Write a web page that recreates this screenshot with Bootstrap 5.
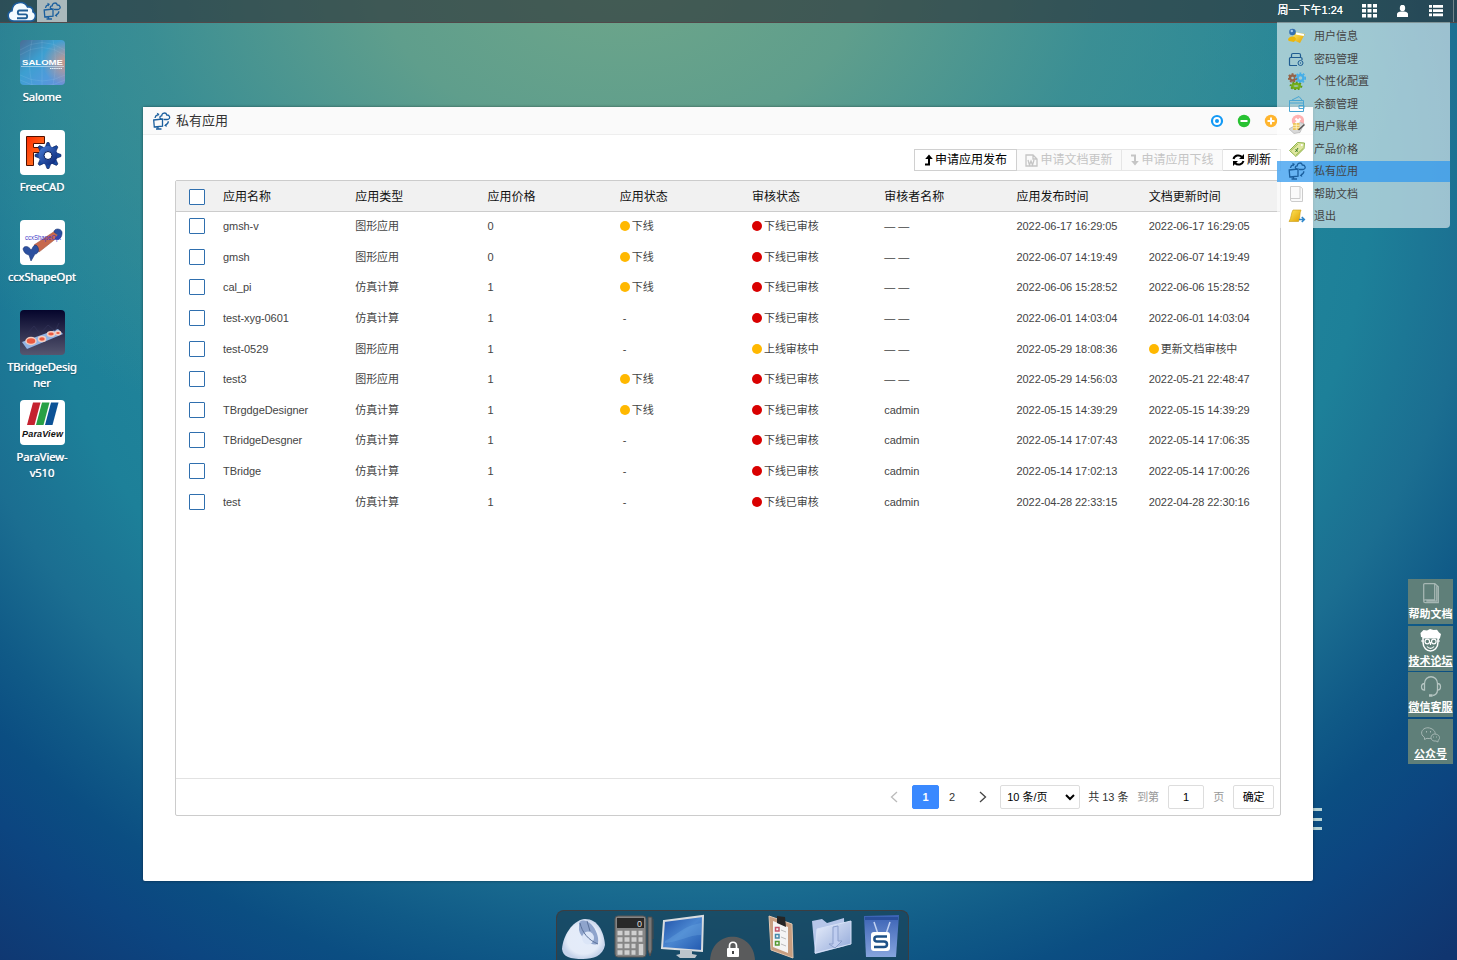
<!DOCTYPE html>
<html lang="zh-CN">
<head>
<meta charset="utf-8">
<meta name="viewport" content="width=device-width, initial-scale=1">
<title>私有应用</title>
<link href="https://cdn.jsdelivr.net/npm/bootstrap@5.3.0/dist/css/bootstrap.min.css" rel="stylesheet">
<style>
body{height:960px;overflow:hidden;position:relative;font-family:"Liberation Sans","Noto Sans CJK SC",sans-serif;font-size:11px;line-height:16px;color:#444;
background:radial-gradient(ellipse 800px 520px at 620px -20px,#6ea68a 0,#5f9e8c 30%,rgba(66,145,146,.75) 60%,rgba(27,128,152,0) 100%),
radial-gradient(ellipse 1000px 900px at 700px 180px,#2c8c9a 0,#23869a 50%,#1d8099 67%,#1b6e91 78%,#105a87 87%,#0b4e82 93%,#0c4580 100%,#10356f 114%)}
svg{display:block;flex:none}
.topbar{height:23px;background:rgba(45,50,55,.65);border-bottom:1px solid #51494a;color:#fff}
.logo{margin-left:7px}
.task{width:30px;height:22px;margin-left:1px;background:rgba(255,255,255,.6)}
.clock{font-size:11px;text-shadow:0 0 .6px #fff;margin:-3px 19px 0 0}
.desk{position:absolute;left:6px;top:40px;width:72px}
.app{height:90px;color:#fff;font:11.4px/16px "Noto Sans",sans-serif;text-align:center}
.app svg{border-radius:4px;margin-bottom:4px}
.app span{letter-spacing:-.2px;text-shadow:0 0 .7px #fff,0 1px 1px #0006}
.win{position:absolute;left:143px;top:107px;width:1170px;height:774px;background:#fff;border-radius:2px;box-shadow:0 0 3px #0007}
.wtitle{height:28px;background:#fafafa;border-bottom:1px solid #eee;font-size:13px;color:#333;padding:0 10px 0 9px}
.tools{height:22px;margin:14px 32px 9px 0}
.tbtn{height:22px;border:1px solid #d0d0d0;border-left-width:0;font-size:12px;line-height:20px;color:#000;background:#fff;border-radius:0;padding:0;display:flex;align-items:center;justify-content:center;gap:2px}
.tbtn.off{background:#fafafa;color:#c5c5c5;border-color:#e6e6e6}
.grid-box{margin:0 32px;height:636px;border:1px solid #ccc;border-radius:2px;overflow:hidden}
.grow{display:grid;grid-template-columns:47px repeat(7,132.25px) 1fr;height:30.6px;align-items:center}
.ghead{height:31px;background:#f1f1f1;border-bottom:1px solid #ccc;font-size:12px;color:#111;padding-top:1px}
#rows{margin-top:-1px;letter-spacing:-.07px}
.cbx{width:16px;height:16px;border:1px solid #2f6fae;border-radius:1px;background:#fff;margin-left:13px}
.dot{display:inline-block;width:10px;height:10px;border-radius:50%;margin-right:2px;vertical-align:-1px}
.pager{height:37px;border-top:1px solid #e2e2e2;color:#333}
.pg{height:24px;border:1px solid #ddd;border-radius:2px;color:#000;display:flex;align-items:center;justify-content:center;background:#fff}
.umenu{position:absolute;left:1277px;top:22px;width:173px;height:206px;background:rgba(255,255,255,.57);border-radius:0 0 4px 4px;padding-top:2.5px;z-index:3;border-top:1px solid #809498}
.umenu div{height:21px;margin-bottom:1.5px;padding-left:11px;gap:8px}
.umenu .on{background:rgba(45,151,239,.72)}
.side{position:absolute;right:4px;top:579px;width:45px;z-index:2}
.side div{height:45px;margin-bottom:1.6px;background:#5f7f79;color:#fff;font-weight:bold;padding-top:3px;white-space:nowrap}
.side span{line-height:15px;display:block;margin-top:2px}
.dock{position:absolute;left:556px;top:910px;width:353px;height:50px;background:rgba(27,65,85,.68);border:1px solid #3c3d40;border-bottom:0;border-radius:8px 8px 0 0}
.handle{position:absolute;left:1306px;top:808px;width:16px;height:22px;border-top:3px solid #b5d2d5;border-bottom:3px solid #b5d2d5}
.handle i{display:block;height:3px;margin-top:7px;background:#b5d2d5}
</style>
<script src="https://cdn.jsdelivr.net/npm/bootstrap@5.3.0/dist/js/bootstrap.bundle.min.js"></script>
</head>
<body>
<svg width="0" height="0" class="position-absolute">
<defs>
<symbol id="pc" viewBox="0 0 18 18"><g fill="none" stroke="#1b5f9e" stroke-width="1.3"><path d="M1.200 8 10 7v7.200L1.800 15zM5.500 15v2M3.500 17h5.500"/><path d="M9 7C6.500 6.500 7 3.700 9.200 3.800 9.500.3 13.600.2 14.300 3c3-.2 4 3.600 1.300 4.300-2 .3-3.500.2-4.600 0"/><path d="M2.500 6C2.700 4.400 3.600 3.400 5 2.900M15.800 9.200c0 1.800-1 3-2.600 3.600"/></g><path fill="#1b5f9e" d="M4.300.8 7 2.100 5.200 4.500zM14.200 15l-2.600-1.400 2.300-2.200z"/></symbol>
<symbol id="book" viewBox="0 0 20 22"><path d="M3.500 2.500Q3.500 1.500 4.500 1.500H14V17H5q-1.500 0-1.500 1.300T5 19.700h12.500V4.500L14 1.500M3.500 2.500v16M6 18.400h10V4" fill="none" stroke="currentColor" stroke-width="1.200"/></symbol>
<linearGradient id="gy" x2="1" y2="1"><stop stop-color="#ffe65c"/><stop offset="1" stop-color="#e0a000"/></linearGradient>
<linearGradient id="gs" x2="1" y2="1"><stop stop-color="#4a6d95"/><stop offset=".4" stop-color="#3c9fd0"/><stop offset=".7" stop-color="#4f9bdb"/><stop offset="1" stop-color="#6b8fd8"/></linearGradient>
<radialGradient id="gs2" cx="1" cy=".5" r=".5"><stop stop-color="#c99a8c"/><stop offset="1" stop-color="#c99a8c" stop-opacity="0"/></radialGradient>
<linearGradient id="gr" x2="1" y2="1"><stop stop-color="#ff2a00"/><stop offset="1" stop-color="#ff8a2a"/></linearGradient>
<linearGradient id="gb" x2="1" y2="1"><stop stop-color="#4c80d8"/><stop offset="1" stop-color="#062070"/></linearGradient>
<linearGradient id="gd" x2="0" y2="1"><stop stop-color="#05052c"/><stop offset="1" stop-color="#55566f"/></linearGradient>
<radialGradient id="gw"><stop stop-color="#e4ecfa"/><stop offset=".75" stop-color="#e4ebf8"/><stop offset="1" stop-color="#c6d3ea"/></radialGradient>
<linearGradient id="gm" x2="1" y2="1"><stop stop-color="#1e4fa6"/><stop offset=".5" stop-color="#4a86d0"/><stop offset="1" stop-color="#2158ae"/></linearGradient>
<linearGradient id="gf" x2="1" y2="1"><stop stop-color="#eaf0fc"/><stop offset="1" stop-color="#8fa6d8"/></linearGradient>
<linearGradient id="gt" x2="0" y2="1"><stop stop-color="#3a62b4"/><stop offset="1" stop-color="#86a4de"/></linearGradient>
</defs></svg>

<nav class="topbar d-flex align-items-center">
<svg class="logo" width="29" height="21" viewBox="0 0 29 21"><path d="M7 20C.2 20-.8 11.500 5 9.800 5.500.5 17-1 20.500 6c4-.6 5.800 2 5.400 4.700C30 12.500 29 20 23.500 20z" fill="#f4fbff" stroke="#1e5d9c" stroke-width="1.600"/><path d="M21 9.500h-8.500c-2.200 0-2.200 3.900 0 3.900h6c2.200 0 2.200 3.900 0 3.900H10" fill="none" stroke="#215f96" stroke-width="1.900"/></svg>
<div class="task d-flex align-items-center justify-content-center me-auto"><svg width="18" height="18"><use href="#pc"/></svg></div>
<span class="clock">周一下午1:24</span>
<svg width="15" height="14" style="margin-right:20px" fill="#fff"><path d="M0 0h4v3.500H0zM5.500 0h4v3.500h-4zM11 0h4v3.500h-4zM0 5h4v3.500H0zM5.500 5h4v3.500h-4zM11 5h4v3.500h-4zM0 10h4v3.500H0zM5.500 10h4v3.500h-4zM11 10h4v3.500h-4z"/></svg>
<svg width="11" height="12" style="margin-right:21px" fill="#fff"><ellipse cx="5.500" cy="3" rx="2.700" ry="3.200"/><path d="M0 12V9c0-1.500 2-2 4-2.400h3C9 7 11 7.500 11 9v3z"/></svg>
<svg width="14" height="12" style="margin-right:10px" fill="#fff"><path d="M0 0h3v2.800H0zM4 0h10v2.800H4zM0 4.200h3V7H0zM4 4.200h10V7H4zM0 8.400h3v2.800H0zM4 8.400h10v2.800H4z"/></svg>
<i style="width:1px;height:22px;background:#71858b;margin-right:3px"></i>
</nav>

<aside class="desk">
<div class="app d-flex flex-column align-items-center"><svg width="45" height="45"><path fill="url(#gs)" d="M0 0h45v45H0z"/><path fill="url(#gs2)" d="M0 0h45v45H0z"/><g fill="none" stroke="#b9e0f5" stroke-opacity=".22" stroke-width=".6"><path d="M0 10Q22-5 45 10M0 15Q22 0 45 15M0 35Q22 47 45 35M0 40Q22 52 45 40M22 0v45M12 0Q7 22 12 45M33 0Q38 22 33 45"/></g><path d="M1 26.500h43" stroke="#d6ecf8" stroke-width=".6"/><text x="2" y="25" font-family="Liberation Sans" font-size="6.500" letter-spacing="0" font-weight="bold" fill="#fff" textLength="41" lengthAdjust="spacingAndGlyphs">SALOME</text><path d="M30 28.500h12" stroke="#e6f3fa" stroke-dasharray="1.500 .6"/></svg><span>Salome</span></div>
<div class="app d-flex flex-column align-items-center"><svg width="45" height="45"><path fill="#fff" d="M0 0h45v45H0z"/><path d="M6.500 6.500h18v7h-11v4h7v5h-7v13h-7z" fill="url(#gr)" stroke="#501000"/><g transform="translate(28 25.500)"><g fill="#1849a0" stroke="#061b55" stroke-width=".6"><path id="t" d="M-2.500-9-1-13H1L2.500-9V9L1 13H-1L-2.500 9z"/><use href="#t" transform="rotate(45)"/><use href="#t" transform="rotate(90)"/><use href="#t" transform="rotate(135)"/></g><circle r="9.500" fill="url(#gb)"/><circle r="4" fill="#fff" stroke="#061b55"/></g></svg><span>FreeCAD</span></div>
<div class="app d-flex flex-column align-items-center"><svg width="45" height="45"><path fill="#fff" d="M0 0h45v45H0z"/><path d="M14 25 35 11l3 6-19 15z" fill="#c7694d" stroke="#a55a45" stroke-width=".6"/><path d="M34 12c0-4 7-4 8 0 .500 5-3 9-7 7l3-4zM3 29c1-4 6-3 8 1 2-2 2-5 5-5 4 3 3 9-1 9l-4 7-2-6C5 34 4 32 3 29z" fill="#2c509f" stroke="#1c3878" stroke-width=".6"/><text x="5" y="20" font-family="Liberation Sans" font-size="7.500" letter-spacing="0" fill="#4038c8" textLength="36" lengthAdjust="spacingAndGlyphs">ccxShapeOpt</text></svg><span>ccxShapeOpt</span></div>
<div class="app d-flex flex-column align-items-center"><svg width="45" height="45"><path fill="url(#gd)" d="M0 0h45v45H0z"/><path d="m2 32 36-13 5 5L7 39z" fill="#92b5e5"/><g fill="#ea5a41" stroke="#f2cdc0" stroke-width="1.500"><ellipse cx="11" cy="31" rx="5" ry="3.500"/><ellipse cx="22" cy="29" rx="3.500" ry="2.500"/><ellipse cx="31" cy="24" rx="3.500" ry="2.200"/><ellipse cx="38" cy="23" rx="2.500" ry="1.700"/></g><path d="m6 25 8-9 6 8 8-9 7 6 4-8" fill="none" stroke="#303258" stroke-width=".7"/></svg><span>TBridgeDesig<br>ner</span></div>
<div class="app d-flex flex-column align-items-center"><svg width="45" height="45"><path fill="#fff" d="M0 0h45v45H0z"/><path fill="#c5222f" d="M13 2.500h7.500l-6 22.500H7z"/><path fill="#28a045" d="M22 2.500h7.500l-6 22.500H16z"/><path fill="#0c5296" d="M31 2.500h7.500l-6 22.500H25z"/><text x="2" y="37" font-family="Liberation Sans" font-size="9" letter-spacing="0" font-style="italic" font-weight="bold" fill="#111" textLength="41">ParaView</text></svg><span>ParaView-<br>v510</span></div>
</aside>

<div class="handle"><i></i></div>

<main class="win">
<header class="wtitle d-flex align-items-center">
<svg width="19" height="18" class="me-1"><use href="#pc"/></svg><span style="margin-left:1px">私有应用</span>
<svg class="ms-auto" width="94" height="14" style="margin-right:-1px"><circle cx="7" cy="7" r="5" fill="#fff" stroke="#1299f5" stroke-width="2.200"/><circle cx="7" cy="7" r="2" fill="#1299f5"/><circle cx="34" cy="7" r="6.200" fill="#28c232"/><path d="M30.500 7h7" stroke="#fff" stroke-width="2"/><circle cx="61" cy="7" r="6.200" fill="#ffb52e"/><path d="M57.500 7h7M61 3.500v7" stroke="#fff" stroke-width="2"/><circle cx="88" cy="7" r="6.200" fill="#ff4d4d"/><path d="m85.500 4.500 5 5m0-5-5 5" stroke="#fff" stroke-width="2"/></svg>
</header>
<div class="tools d-flex justify-content-end">
<button class="tbtn" style="width:103px;border-left-width:1px"><svg width="9" height="12"><path d="M1 10.500h4V4" fill="none" stroke="#000" stroke-width="2"/><path d="M1.200 5 5 .5 8.800 5z"/></svg>申请应用发布</button>
<button class="tbtn off" style="width:105px"><svg width="13" height="13" fill="none" stroke="#c5c5c5" stroke-width="1.300"><path d="M1 1h7l4 4v7H1zM8 1v4h4M3 6l1.500 5L6 7l1.500 4L9 6"/></svg>申请文档更新</button>
<button class="tbtn off" style="width:101px"><svg width="9" height="12"><path d="M1 1.500h4V8" fill="none" stroke="#c5c5c5" stroke-width="2"/><path d="M1.200 7 5 11.500 8.800 7z" fill="#c5c5c5"/></svg>申请应用下线</button>
<button class="tbtn" style="width:58px"><svg width="13" height="12"><path d="M1.500 5A5 4.800 0 0 1 10 3M11.500 7A5 4.800 0 0 1 3 9" fill="none" stroke="#000" stroke-width="2"/><path d="M12 0v5H7zM1 12V7h5z"/></svg>刷新</button>
</div>
<section class="grid-box d-flex flex-column">
<div class="grow ghead flex-shrink-0"><i class="cbx"></i><span>应用名称</span><span>应用类型</span><span>应用价格</span><span>应用状态</span><span>审核状态</span><span>审核者名称</span><span>应用发布时间</span><span>文档更新时间</span></div>
<div id="rows"></div>
<footer class="pager mt-auto d-flex align-items-center">
<svg width="8" height="12" style="margin-left:714px"><path d="M7 1 1.500 6 7 11" fill="none" stroke="#bbb" stroke-width="1.300"/></svg>
<span class="pg fw-bold text-white" style="width:27px;margin-left:14px;background:#3a89ff;border-color:#3a89ff">1</span>
<span style="margin-left:10px">2</span>
<svg width="8" height="12" style="margin-left:24px"><path d="m1 1 5.500 5L1 11" fill="none" stroke="#444" stroke-width="1.300"/></svg>
<span class="pg justify-content-between" style="width:80px;margin-left:13px;padding:0 4px 0 6px">10 条/页<svg width="10" height="7"><path d="m1 1 4 4 4-4" fill="none" stroke="#000" stroke-width="2"/></svg></span>
<span style="margin-left:8px;width:49px">共 13 条</span><span style="color:#999;width:31px">到第</span>
<span class="pg" style="width:36px">1</span><span style="margin-left:9px;width:20px;color:#999">页</span>
<span class="pg" style="width:41px">确定</span>
</footer>
</section>
</main>

<div class="umenu">
<div class="d-flex align-items-center"><svg width="18" height="18"><path d="m6 5 11 2-5 9-7-3z" fill="url(#gy)"/><path d="m8 6.500 8 1.500" stroke="#fff" stroke-width="2"/><circle cx="4.500" cy="5" r="3.300" fill="#356fb0"/><circle cx="3.800" cy="4" r="1.200" fill="#a9cdf0"/><path d="M0 13c0-4 7-5 8-1l-2 3-5-1z" fill="#e9b60d"/></svg>用户信息</div>
<div class="d-flex align-items-center"><svg width="18" height="18"><path d="M3.500 7.500V5q0-1.500 1.500-1.500h6q1.500 0 1.500 1.500v2.500M9 15.500H2.500q-1 0-1-1v-6q0-1 1-1H13q1 0 1 1V10" fill="none" stroke="#1f5c91" stroke-width="1.200"/><circle cx="12.500" cy="13" r="2.500" fill="none" stroke="#1f5c91"/><circle cx="12.500" cy="13" r=".7" fill="#1f5c91"/></svg>密码管理</div>
<div class="d-flex align-items-center"><svg width="18" height="18" fill="none"><g stroke-width="2.400"><circle cx="4.500" cy="6" r="2.500" stroke="#956347"/><circle cx="12.500" cy="6" r="3" stroke="#45aee8"/><ellipse cx="8" cy="14" rx="3.800" ry="2" stroke="#75ae18"/></g><g stroke-width="1.600" stroke-dasharray="1.800 1.700"><circle cx="4.500" cy="6" r="4" stroke="#956347"/><circle cx="12.500" cy="6" r="4.800" stroke="#45aee8"/><ellipse cx="8" cy="14" rx="5.600" ry="3.500" stroke="#5c9a10"/></g></svg>个性化配置</div>
<div class="d-flex align-items-center"><svg width="18" height="18"><path d="M1.500 5.500h14v11h-14zM4 5l7-3.500L14 5M1.500 8h14M11 10.500h5v3h-5z" fill="none" stroke="#48a5d2"/></svg>余额管理</div>
<div class="d-flex align-items-center"><svg width="18" height="18"><path d="m1 12 5 4.500 6-1 4-9-4-1z" fill="#d9d9d9" stroke="#aaa" stroke-width=".6"/><path d="M5 6h6.500v7H5z" fill="#edc55d"/><path d="M5 8.300h6.500M5 10.700h6.500M8.300 6v7" stroke="#fff5c8" stroke-width=".8"/><path d="m10.500 13 6-5.500" stroke="#555" stroke-width="1.500"/></svg>用户账单</div>
<div class="d-flex align-items-center"><svg width="18" height="18"><path d="m1.500 10.500 8-8 7 .5-.5 5.500-8 8z" fill="#dfe7a0" stroke="#8eb44c"/><path d="m3 10.500 7-6.500M8 15l7-6.500" stroke="#a6be58"/><path d="m7.500 9.500 2.500 2M7.500 12l2.500-4" fill="none" stroke="#347a24"/><circle cx="13.800" cy="5" r="1" fill="#fff"/></svg>产品价格</div>
<div class="d-flex align-items-center on"><svg width="18" height="18"><use href="#pc"/></svg>私有应用</div>
<div class="d-flex align-items-center"><svg width="18" height="18"><path d="M2.500 1.500h9.500l2.500 2v13h-11l-1-1.500z" fill="#fafafa" stroke="#ccc"/><path d="M3 13.500h9V2" fill="none" stroke="#ccc"/></svg>帮助文档</div>
<div class="d-flex align-items-center"><svg width="18" height="18"><path d="M5 3h8c-1.500 3-.5 7-2.500 11.500H1C3.500 11 3 6 5 3z" fill="url(#gy)" stroke="#c99a12" stroke-width=".6"/><path d="M11 12.500h5m-2.200-2.500 2.500 2.500-2.500 2.500" fill="none" stroke="#2f87ca" stroke-width="1.600"/></svg>退出</div>
</div>

<aside class="side">
<div class="text-center"><svg class="mx-auto" width="22" height="23" style="color:#a6b7b4"><use href="#book" width="21" height="23"/></svg><span>帮助文档</span></div>
<div class="text-center text-decoration-underline"><svg class="mx-auto" width="24" height="23"><path d="M2 8 1.500 4 4.500 1 8 1.500 11 0l3.500 1L18 .8l2 2.700 2 1.500-1 4-1.500 2z" fill="#fff"/><path d="M4 8h15v5c0 6-4 9-7.500 9S4 19 4 13z" fill="#5f7f79" stroke="#fff" stroke-width="1.500"/><path d="M4 8.500h15" stroke="#fff" stroke-width="2"/><g fill="none" stroke="#fff" stroke-width="1.200"><circle cx="8.300" cy="12.500" r="2.300"/><circle cx="14.800" cy="12.500" r="2.300"/><path d="M11.500 13v3M8 17.500c2 2.500 5 2.500 7 0M2 12h3m13 0h3"/></g></svg><span>技术论坛</span></div>
<div class="text-center text-decoration-underline"><svg class="mx-auto" width="22" height="23" fill="none" stroke="#b5c5c2" stroke-width="1.300"><path d="M4.500 8.500C4.500-.5 17.500-.5 17.500 8.500M4.500 8.500c-4 0-4 6.500 0 6.500zM17.500 8.500c4 0 4 6.500 0 6.500zM17.500 15c0 4-3 5.500-5 5.500"/><path d="M9 20.500h3.500" stroke-width="2.500"/></svg><span>微信客服</span></div>
<div class="text-center text-decoration-underline"><svg class="mx-auto" width="22" height="23" fill="none" stroke="#a6b7b4"><path d="M4.500 15.500c-7-5 0-12 6.500-9 3.500 1.500 4.500 4 4 5.500M4.500 15.500v2l2.500-1.200c1.500.4 3 .3 4 0"/><path d="M14.500 12c5 0 6.500 4.500 3.500 6.500v1.500l-2-1c-3 .5-5-1-5-3.500.2-2 1.500-3.300 3.500-3.500z"/><path d="M6.500 9v1.500m4-1.500v1.500m3 4v1m3-1v1"/></svg><span>公众号</span></div>
</aside>

<footer class="dock">
<svg width="351" height="49">
<path d="M5 38C6 25 15 10 27 8c13-1 20 12 21 26-2 11-12 14-22 14C13 48 6 46 5 38z" fill="url(#gw)"/><path d="M22 13c1-5 7-4 12 0 5 5 8 13 7 19-3 5-17-3-19-13z" fill="#8fa4cc"/><ellipse cx="31" cy="27" rx="6" ry="6.500" fill="#dbe5f7"/><path d="M23 12c2 9 8 17 18 21M30 10l3 10" fill="none" stroke="#5a7099"/>
<rect x="58" y="5" width="31" height="41" rx="3" fill="#858585" stroke="#555"/><path d="M60 7h27v10H60z" fill="#282828"/><text x="80" y="16" font-size="9" fill="#ddd">0</text><g stroke="#cfcfcf" stroke-width="4.500"><path d="M60.500 22h25" stroke-dasharray="5 2"/><path d="M60.500 28.500h25" stroke-dasharray="5 2"/><path d="M60.500 35h18" stroke-dasharray="5 2"/><path d="M60.500 41.500h18" stroke-dasharray="5 2"/><path d="M84 33v11"/></g><path d="M91 6h4v33l-2 6-2-6zM96 8v20" fill="#777" stroke="#4b4b4b"/>
<path d="m107 10 39-5-1 35-40-3z" fill="url(#gm)" stroke="#d8dce0" stroke-width="2"/><path d="M108 30c12-6 18-15 36-18v12c-12 0-22 7-36 8z" fill="#6ea8e2" opacity=".35"/><path d="M123 39h12v4l5 1-2 3h-15l-4-3 4-1z" fill="#bdc5cc"/>
<path d="M153 49c2-31 43-31 45 0z" fill="#5a5b5c"/><rect x="170" y="37" width="12" height="9" rx="1" fill="#fff"/><path d="M172.500 38v-3c0-5 7-5 7 0v3" fill="none" stroke="#fff" stroke-width="1.700"/><path d="M176 40v3" stroke="#444" stroke-width="2"/>
<path d="m212 5 23 8 1 34-22-8z" fill="#c79e80" stroke="#e1c7b2"/><path d="m216 10 15 6v26l-15-6z" fill="#f4f4f4"/><path d="m220 5 8 1 1 10-9-4z" fill="#252525"/><g fill="none" stroke-width="1.500"><path d="M218.500 16.500h3.500v3.500h-3.500z" stroke="#c4566b"/><path d="M218.500 23.500h3.500v3.500h-3.500z" stroke="#48a"/><path d="M218.500 30.500h3.500v3.500h-3.500z" stroke="#593"/></g><path d="m224 19 5 2m-5 5 5 2m-5 5 5 2" stroke="#bbb"/>
<path d="m255 10 10-2 5 4 17-5 1 28-30 8z" fill="#b6c6e9"/><path d="m260 18 34-8v23l-36 9z" fill="url(#gf)" stroke="#d6e1f7"/><path d="m276 16 5-1v15h4l-7 7-6-4h4z" fill="#bfcdf0" stroke="#8b9fcc"/>
<path d="m307 5 35-1-3 42h-30z" fill="url(#gt)"/><path d="M308 6h33v3h-33z" fill="#294f9c"/><path d="m317 11 4 12M333 11l-4 12" stroke="#c1d1f1" stroke-width="1.500"/><rect x="314" y="21" width="19" height="19" rx="3" fill="#fff"/><path d="M330 25.500h-10c-3.500 0-3.500 5 0 5h7c4 0 4 5.500 0 5.500h-10" fill="none" stroke="#1e5187" stroke-width="2.500"/>
</svg>
</footer>

<script>
const rows=[
['gmsh-v','图形应用',0,1,'','','2022-06-17 16:29:05','2022-06-17 16:29:05'],
['gmsh','图形应用',0,1,'','','2022-06-07 14:19:49','2022-06-07 14:19:49'],
['cal_pi','仿真计算',1,1,'','','2022-06-06 15:28:52','2022-06-06 15:28:52'],
['test-xyg-0601','仿真计算',1,0,'','','2022-06-01 14:03:04','2022-06-01 14:03:04'],
['test-0529','图形应用',1,0,'上线审核中','','2022-05-29 18:08:36',''],
['test3','图形应用',1,1,'','','2022-05-29 14:56:03','2022-05-21 22:48:47'],
['TBrgdgeDesigner','仿真计算',1,1,'','cadmin','2022-05-15 14:39:29','2022-05-15 14:39:29'],
['TBridgeDesgner','仿真计算',1,0,'','cadmin','2022-05-14 17:07:43','2022-05-14 17:06:35'],
['TBridge','仿真计算',1,0,'','cadmin','2022-05-14 17:02:13','2022-05-14 17:00:26'],
['test','仿真计算',1,0,'','cadmin','2022-04-28 22:33:15','2022-04-28 22:30:16']];
const dot=(c,t)=>`<i class="dot" style="background:${c}"></i>${t}`;
document.getElementById('rows').innerHTML=rows.map(r=>`<div class="grow"><i class="cbx"></i><span>${r[0]}</span><span>${r[1]}</span><span>${r[2]}</span><span>${r[3]?dot('#ffb800','下线'):'&nbsp;-'}</span><span>${r[4]?dot('#ffb800',r[4]):dot('#d90000','下线已审核')}</span><span>${r[5]||'— —'}</span><span>${r[6]}</span><span>${r[7]||dot('#ffb800','更新文档审核中')}</span></div>`).join('');
</script>
</body>
</html>
